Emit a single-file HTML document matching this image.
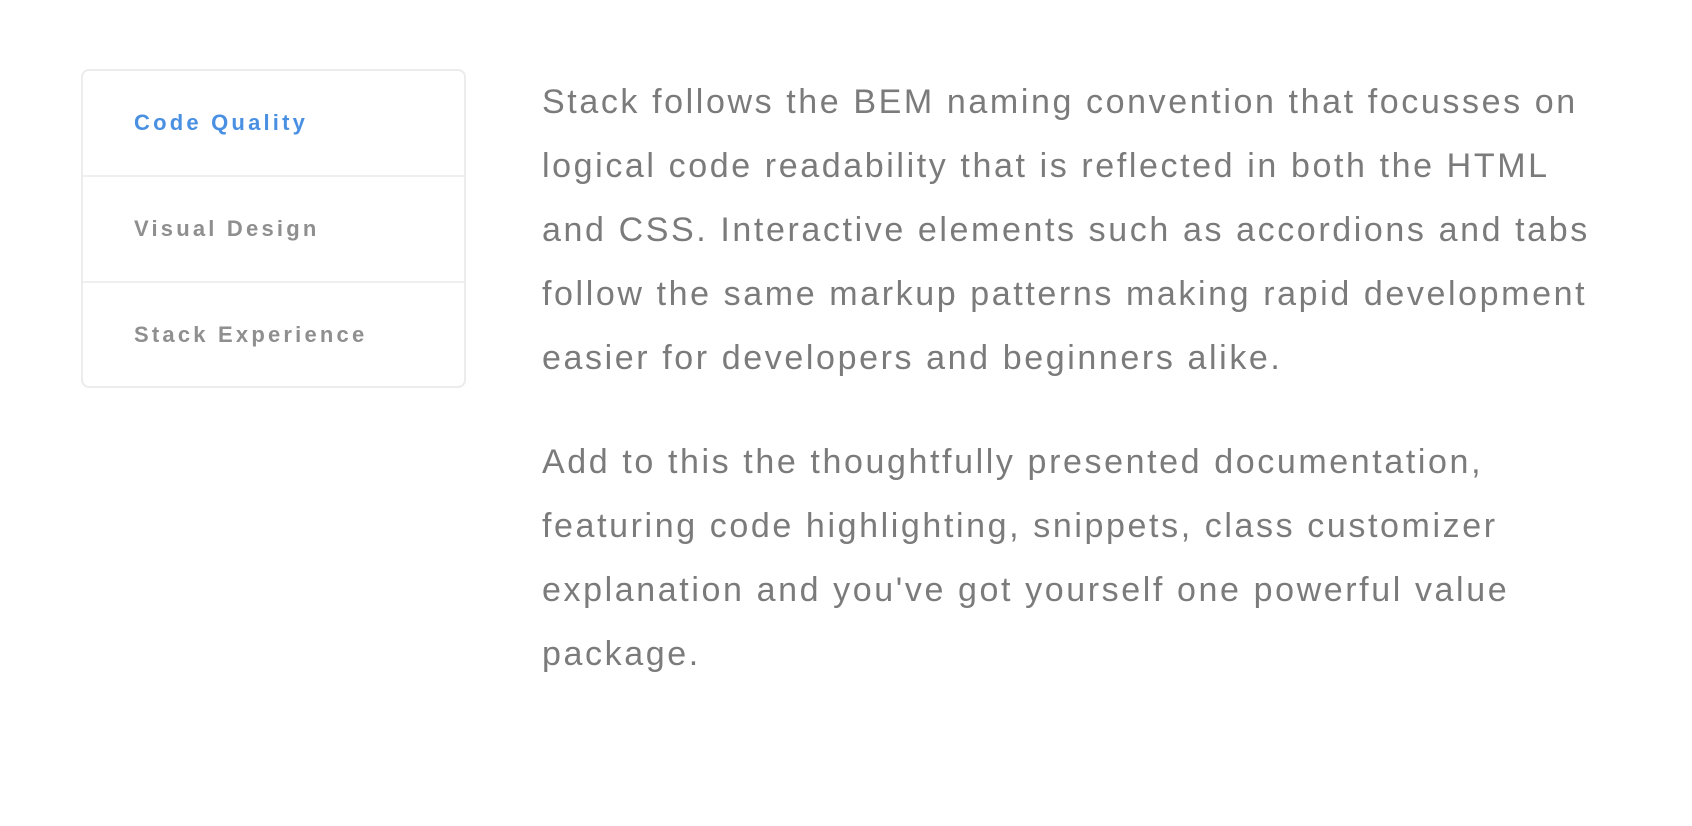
<!DOCTYPE html>
<html><head><style>
body{margin:0;background:#fff;width:1692px;height:826px;overflow:hidden;font-family:"Liberation Sans",sans-serif;}
.card{position:absolute;left:81px;top:69px;width:385px;height:319px;border:2px solid #ececec;border-radius:8px;box-sizing:border-box;}
.tab{height:106px;border-bottom:2px solid #efefef;box-sizing:border-box;padding-left:51px;font-size:22px;font-weight:bold;color:#8f8f8f;line-height:104px;letter-spacing:3.2px}
.tab:last-child{border-bottom:none}
.tab.a{color:#4a90e2}
.txt{position:absolute;left:542px;top:70px;font-size:34px;line-height:64px;color:#7b7b7b;white-space:nowrap;letter-spacing:2.6px}
.txt p{margin:0 0 40px 0}
</style></head><body>
<div class="card">
<div class="tab a">Code Quality</div>
<div class="tab">Visual Design</div>
<div class="tab">Stack Experience</div>
</div>
<div class="txt">
<p>Stack follows the BEM naming convention that focusses on<br>logical code readability that is reflected in both the HTML<br>and CSS. Interactive elements such as accordions and tabs<br>follow the same markup patterns making rapid development<br>easier for developers and beginners alike.</p>
<p>Add to this the thoughtfully presented documentation,<br>featuring code highlighting, snippets, class customizer<br>explanation and you've got yourself one powerful value<br>package.</p>
</div>
</body></html>
